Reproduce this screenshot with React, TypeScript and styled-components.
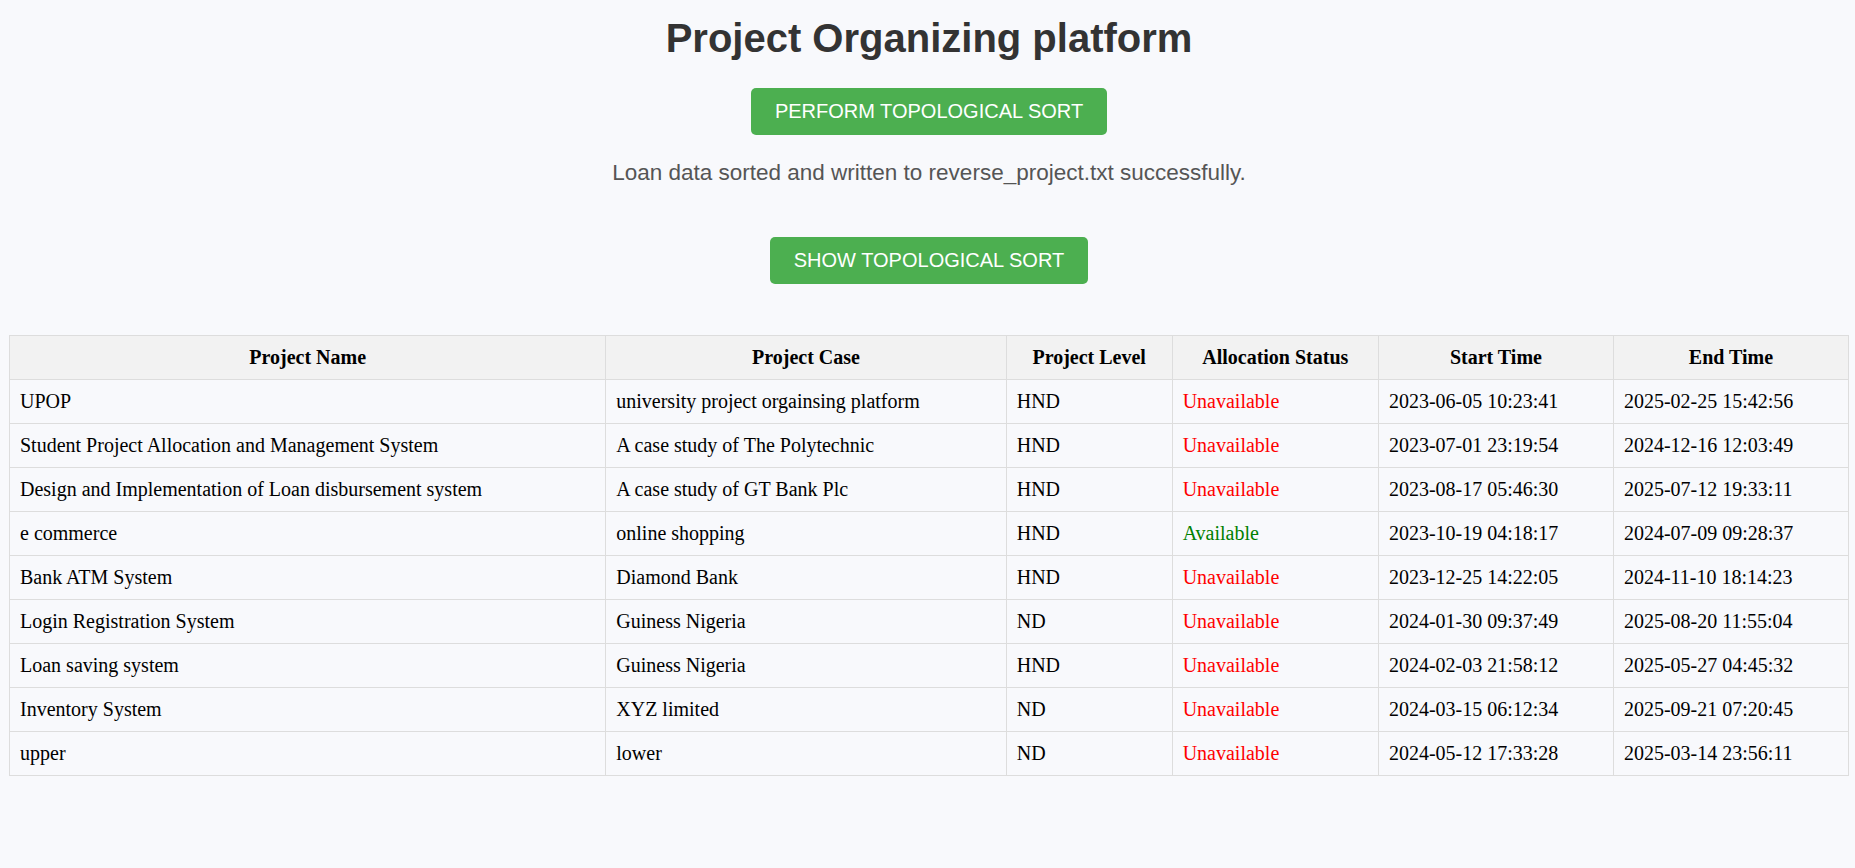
import React from 'react';
import styled, { createGlobalStyle } from 'styled-components';

const GlobalStyle = createGlobalStyle`
  body {
    margin: 0;
    padding: 0 6px 0 9px;
    background: #f8f9fc;
    font-family: "Liberation Sans", Arial, sans-serif;
  }
`;

const Page = styled.div`
  display: flex;
  flex-direction: column;
  align-items: center;
  padding-top: 15px;
`;

const Title = styled.h1`
  margin: 0 0 27px;
  font-size: 40px;
  font-weight: 700;
  line-height: 46px;
  color: #333;
`;

const Button = styled.button`
  padding: 12px 24px;
  border: none;
  border-radius: 5px;
  background: #4caf50;
  color: #fff;
  font-family: "Liberation Sans", Arial, sans-serif;
  font-size: 20px;
  line-height: 23px;
  cursor: pointer;
`;

const Message = styled.p`
  margin: 25px 0 51px;
  font-size: 22.5px;
  line-height: 26px;
  color: #555;
`;

const Table = styled.table`
  width: 100%;
  margin-top: 51px;
  border-collapse: collapse;
  font-family: "Liberation Serif", "Times New Roman", serif;
  font-size: 20px;
  line-height: 23px;
`;

const Th = styled.th`
  padding: 10px;
  border: 1px solid #ddd;
  background: #f2f2f2;
  font-weight: 700;
  text-align: center;
  color: #000;
`;

const Td = styled.td<{ $status?: 'Available' | 'Unavailable' }>`
  padding: 10px;
  border: 1px solid #ddd;
  text-align: left;
  color: ${({ $status }) =>
    $status === 'Available' ? '#008000' : $status === 'Unavailable' ? '#ff0000' : '#000'};
`;

type Project = {
  name: string;
  caseStudy: string;
  level: string;
  status: 'Available' | 'Unavailable';
  start: string;
  end: string;
};

const projects: Project[] = [
  { name: 'UPOP', caseStudy: 'university project orgainsing platform', level: 'HND', status: 'Unavailable', start: '2023-06-05 10:23:41', end: '2025-02-25 15:42:56' },
  { name: 'Student Project Allocation and Management System', caseStudy: 'A case study of The Polytechnic', level: 'HND', status: 'Unavailable', start: '2023-07-01 23:19:54', end: '2024-12-16 12:03:49' },
  { name: 'Design and Implementation of Loan disbursement system', caseStudy: 'A case study of GT Bank Plc', level: 'HND', status: 'Unavailable', start: '2023-08-17 05:46:30', end: '2025-07-12 19:33:11' },
  { name: 'e commerce', caseStudy: 'online shopping', level: 'HND', status: 'Available', start: '2023-10-19 04:18:17', end: '2024-07-09 09:28:37' },
  { name: 'Bank ATM System', caseStudy: 'Diamond Bank', level: 'HND', status: 'Unavailable', start: '2023-12-25 14:22:05', end: '2024-11-10 18:14:23' },
  { name: 'Login Registration System', caseStudy: 'Guiness Nigeria', level: 'ND', status: 'Unavailable', start: '2024-01-30 09:37:49', end: '2025-08-20 11:55:04' },
  { name: 'Loan saving system', caseStudy: 'Guiness Nigeria', level: 'HND', status: 'Unavailable', start: '2024-02-03 21:58:12', end: '2025-05-27 04:45:32' },
  { name: 'Inventory System', caseStudy: 'XYZ limited', level: 'ND', status: 'Unavailable', start: '2024-03-15 06:12:34', end: '2025-09-21 07:20:45' },
  { name: 'upper', caseStudy: 'lower', level: 'ND', status: 'Unavailable', start: '2024-05-12 17:33:28', end: '2025-03-14 23:56:11' },
];

const App: React.FC = () => {
  return (
    <>
      <GlobalStyle />
      <Page>
        <Title>Project Organizing platform</Title>
        <Button>PERFORM TOPOLOGICAL SORT</Button>
        <Message>Loan data sorted and written to reverse_project.txt successfully.</Message>
        <Button>SHOW TOPOLOGICAL SORT</Button>
      </Page>
      <Table>
        <thead>
          <tr>
            <Th>Project Name</Th>
            <Th>Project Case</Th>
            <Th>Project Level</Th>
            <Th>Allocation Status</Th>
            <Th>Start Time</Th>
            <Th>End Time</Th>
          </tr>
        </thead>
        <tbody>
          {projects.map((p) => (
            <tr key={p.name}>
              <Td>{p.name}</Td>
              <Td>{p.caseStudy}</Td>
              <Td>{p.level}</Td>
              <Td $status={p.status}>{p.status}</Td>
              <Td>{p.start}</Td>
              <Td>{p.end}</Td>
            </tr>
          ))}
        </tbody>
      </Table>
    </>
  );
};

export default App;
